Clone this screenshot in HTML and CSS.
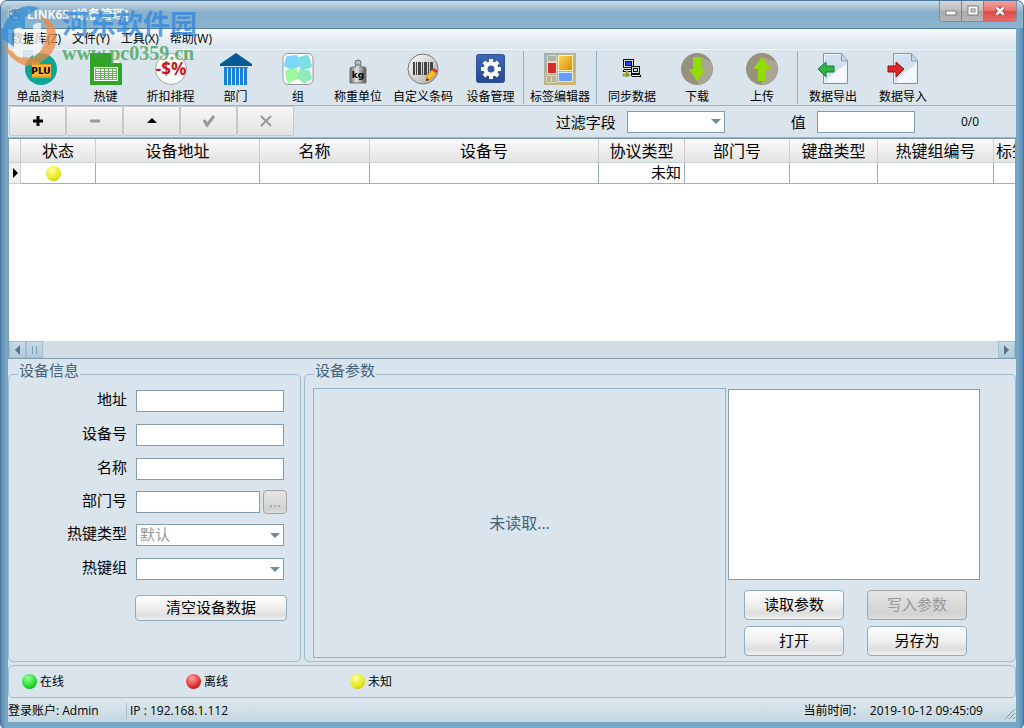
FILE: index.html
```html
<!DOCTYPE html>
<html lang="zh-CN">
<head>
<meta charset="utf-8">
<title>LINK65 [设备管理]</title>
<link rel="stylesheet" href="styles.css">
</head>
<body>
<div class="window">
  <header class="titlebar">
    <svg class="app-icon" width="16" height="16" viewBox="0 0 16 16"><circle cx="8" cy="8" r="7" fill="#7395b6" stroke="#dce7ef"/><path d="M2 5h5v4H3zM9 3h5v4H9zM6 9h6v4H6z" fill="#e7eef4" stroke="#6485a2"/><circle cx="12" cy="4" r="2" fill="#e0ab5c"/></svg>
    <h1 class="title">LINK65 [设备管理]</h1>
    <div class="controls">
      <button class="ctl" aria-label="最小化"><svg width="14" height="12" viewBox="0 0 14 12"><rect x="2" y="6" width="10" height="4" fill="#fff" stroke="#7c7c7c"/></svg></button>
      <button class="ctl" aria-label="最大化"><svg width="14" height="12" viewBox="0 0 14 12"><rect x="2" y="1" width="10" height="9" fill="#fff" stroke="#7c7c7c"/><rect x="5" y="4" width="4" height="3" fill="#ddd" stroke="#7c7c7c"/></svg></button>
      <button class="ctl close" aria-label="关闭"><svg width="14" height="12" viewBox="0 0 14 12"><path d="M3.500 2.500l7 7M10.500 2.500l-7 7" stroke="#9c3532" stroke-width="4.500"/><path d="M3.500 2.500l7 7M10.500 2.500l-7 7" stroke="#fff" stroke-width="2.600"/></svg></button>
    </div>
  </header>
  <div class="client">
    <nav class="menu">
      <button>数据库(Z)</button><button>文件(Y)</button><button>工具(X)</button><button>帮助(W)</button>
    </nav>
    <div class="toolbar">
      <button class="tool"><svg width="32" height="32" viewBox="0 0 32 32"><circle cx="16" cy="16" r="16" fill="#0ea597"/><path d="M7 9h7l2 2h10v14H7z" fill="#e59a26"/><path d="M7 12h19v11H7z" fill="#fdb733"/><text x="16" y="21" class="plu">PLU</text></svg>单品资料</button>
      <button class="tool"><svg width="32" height="32" viewBox="0 0 32 32"><path d="M0 0h21l11 11v21H0z" fill="#32a426"/><path d="M21 0v10h11z" fill="#9fda83"/><path d="M22 1v9h9z" fill="#edf7e7"/><rect x="4" y="14" width="24" height="14" fill="#fff"/><path d="M5.500 15.500h21v11h-21zM5.500 18.500h21M5.500 20.500h21M5.500 22.500h21M5.500 24.500h21M10.500 15v11M14.500 15v11M18.500 15v11M22.500 15v11" stroke="#68b45c" fill="none"/></svg>热键</button>
      <button class="tool"><svg width="32" height="32" viewBox="0 0 32 32"><circle cx="16" cy="16" r="15.500" fill="#fff" stroke="#a3a7a9"/><text x="16" y="22" class="discount">-$%</text></svg>折扣排程</button>
      <button class="tool"><svg width="32" height="32" viewBox="0 0 32 32"><path d="M16 0L32 11v2H0v-2z" fill="#075a95"/><g fill="#1682ce"><path d="M4 15h3v17H4zM8 15h3v17H8zM12 15h3v17h-3zM16 15h3v17h-3zM20 15h3v17h-3zM24 15h3v17h-3z"/></g><path d="M4 14.500h24" stroke="#1682ce"/></svg>部门</button>
      <button class="tool narrow"><svg width="32" height="32" viewBox="0 0 32 32"><rect x="1" y=".5" width="30" height="31" rx="5" fill="#fff" stroke="#929a9e"/><g stroke-width="4" stroke-linejoin="round"><path d="M6 5l8-1 2 8-6 3-6-3z" fill="#7bd6fa" stroke="#7bd6fa"/><path d="M18 6l7-2 3 9-8 2z" fill="#7ddfe2" stroke="#7ddfe2"/><path d="M5 19l8-2 2 7-8 4z" fill="#9df79c" stroke="#9df79c"/><path d="M19 18l7 1 2 6-6 3-5-4z" fill="#90eab9" stroke="#90eab9"/></g></svg>组</button>
      <button class="tool narrow"><svg width="32" height="32" viewBox="0 0 32 32"><defs><linearGradient id="metal"><stop stop-color="#666"/><stop offset=".4" stop-color="#e6e6e6"/><stop offset="1" stop-color="#555"/></linearGradient></defs><circle cx="16" cy="10" r="3" fill="#bbb" stroke="#666"/><path d="M14 12h5v2h4q1 0 1 2v14H8V16q0-2 2-2h4z" fill="url(#metal)" stroke="#777"/><text x="16" y="25" class="kg">kg</text></svg>称重单位</button>
      <button class="tool wide"><svg width="32" height="32" viewBox="0 0 32 32"><defs><linearGradient id="disc" x2="1" y2="1"><stop stop-color="#fff"/><stop offset="1" stop-color="#aaa"/></linearGradient></defs><circle cx="16" cy="16" r="15" fill="url(#disc)" stroke="#777"/><path d="M6 9h2v13H6zM9 9h1v13H9zM11 9h3v13h-3zM15 9h1v13h-1zM17 9h3v13h-3zM21 9h1v13h-1zM23 9h3v11h-3z" fill="#444"/><path d="M20 23l5-6 4 3-5 6-5 2z" fill="#ffc31f" stroke="#d88c18"/><path d="M25 17l2-2 4 3-2 2z" fill="#d8353e"/><path d="M19 28l1-3 2 2z" fill="#222"/></svg>自定义条码</button>
      <button class="tool"><svg width="32" height="32" viewBox="0 0 32 32"><defs><linearGradient id="blue" x2="0" y2="1"><stop stop-color="#3e67b5"/><stop offset="1" stop-color="#254991"/></linearGradient></defs><rect x="1.500" y="1.500" width="28" height="28" rx="2" fill="url(#blue)" stroke="#30539a"/><g fill="#fff"><circle cx="16" cy="16" r="7.500"/><path d="M14 6h4v20h-4zM6 14h20v4H6z"/><path d="M14 6h4v20h-4zM6 14h20v4H6z" transform="rotate(45 16 16)"/></g><circle cx="16" cy="16" r="3.500" fill="#3159a5"/></svg>设备管理</button>
      <span class="separator"></span>
      <button class="tool label-tool"><svg width="32" height="32" viewBox="0 0 32 32"><defs><linearGradient id="tile" x2="1" y2="1"><stop stop-color="#9fb3b4"/><stop offset="1" stop-color="#d7b662"/></linearGradient><linearGradient id="gold" x2="1" y2="1"><stop stop-color="#ffd75a"/><stop offset="1" stop-color="#d88a00"/></linearGradient></defs><path d="M0 0h32v32H0z" fill="url(#tile)"/><path d="M3.500 2.500h9v6h-9zM2.500 22.500h10v7h-10zM7.500 22v8" stroke="#d6d6c8" fill="none"/><rect x="14.500" y="2.500" width="14" height="15" fill="url(#gold)" stroke="#fff1b1"/><rect x="3.500" y="9.500" width="9" height="11" fill="#d52c29" stroke="#ffd0c7"/><rect x="14.500" y="19.500" width="14" height="9" fill="#659bfa" stroke="#d9e8ff"/></svg>标签编辑器</button>
      <span class="separator"></span>
      <button class="tool wide"><svg width="32" height="32" viewBox="0 0 32 32"><g stroke="#111"><rect x="7.500" y="6.500" width="10" height="8" fill="#ddd"/><rect x="9.500" y="8.500" width="6" height="4" fill="#1648db"/><path d="M8 16.500h9l-1 2H7z" fill="#eee"/><rect x="15.500" y="13.500" width="8" height="7" fill="#ddd"/><rect x="17.500" y="15.500" width="4" height="3" fill="#a8ece5"/><path d="M15 21.500h9l1 2h-9z" fill="#eee"/></g><path d="M7 21h6v2H7zM10 18h2v5h-2z" fill="#c3d50d" stroke="#586500" stroke-width=".5"/></svg>同步数据</button>
      <button class="tool narrow"><svg width="32" height="32" viewBox="0 0 32 32"><circle cx="16" cy="16" r="16" fill="#98917e"/><path d="M20 4l10 5A16 16 0 0 1 18 32l-2-4z" fill="#aaa594"/><path d="M12 4h8v12h5l-9 12-8-12h4z" fill="#94dc00"/></svg>下载</button>
      <button class="tool wide"><svg width="32" height="32" viewBox="0 0 32 32"><circle cx="16" cy="16" r="16" fill="#98917e"/><path d="M16 4l14 5A16 16 0 0 1 16 32z" fill="#aaa594"/><path d="M16 4l9 12h-5v12h-8V16H7z" fill="#94dc00"/></svg>上传</button>
      <span class="separator"></span>
      <button class="tool wide"><svg width="32" height="32" viewBox="0 0 32 32"><path d="M6.500.5h18l6 7v23h-24z" fill="#e9f1ff" stroke="#7d92ad"/><path d="M8 2h16v7h5v20H8z" fill="#d3e0f2"/><path d="M10 26L29 11v18H10z" fill="#f5f9ff"/><path d="M24.500 1v7h6" fill="#c8d7eb" stroke="#7d92ad"/><path d="M1 16l8-7v4h8v6H9v5z" fill="#30b447" stroke="#177b29"/></svg>数据导出</button>
      <button class="tool wide"><svg width="32" height="32" viewBox="0 0 32 32"><path d="M6.500.5h18l6 7v23h-24z" fill="#e9f1ff" stroke="#7d92ad"/><path d="M8 2h16v7h5v20H8z" fill="#d3e0f2"/><path d="M10 26L29 11v18H10z" fill="#f5f9ff"/><path d="M24.500 1v7h6" fill="#c8d7eb" stroke="#7d92ad"/><path d="M17 16L9 9v4H1v6h8v5z" fill="#dc2627" stroke="#911514"/></svg>数据导入</button>
    </div>
    <div class="filterbar">
      <div class="record-buttons">
        <button aria-label="添加"><svg width="14" height="14" viewBox="0 0 14 14"><path d="M7 2v10M2 7h10" stroke="#000" stroke-width="3"/></svg></button>
        <button aria-label="删除" disabled><svg width="14" height="14" viewBox="0 0 14 14"><path d="M2 7h10" stroke="#999" stroke-width="3"/></svg></button>
        <button aria-label="编辑"><svg width="14" height="14" viewBox="0 0 14 14"><path d="M2 9l5-5 5 5z"/></svg></button>
        <button aria-label="确认" disabled><svg width="14" height="14" viewBox="0 0 14 14"><path d="M2 6l3 5 7-9" fill="none" stroke="#999" stroke-width="3"/></svg></button>
        <button aria-label="取消" disabled><svg width="14" height="14" viewBox="0 0 14 14"><path d="M2 2l10 10M12 2L2 12" stroke="#999" stroke-width="2"/></svg></button>
      </div>
      <div class="filters">
        <label for="field">过滤字段</label><select id="field"><option></option></select>
        <label class="value-label" for="value">值</label><input id="value" type="text">
        <span class="count">0/0</span>
      </div>
    </div>
    <div class="grid">
      <div class="grid-view">
        <table>
          <colgroup><col class="c-mark"><col class="c-state"><col class="c-address"><col class="c-name"><col class="c-device"><col class="c-protocol"><col class="c-dept"><col class="c-keyboard"><col class="c-hotkey"><col class="c-label"></colgroup>
          <thead><tr><th></th><th>状态</th><th>设备地址</th><th>名称</th><th>设备号</th><th>协议类型</th><th>部门号</th><th>键盘类型</th><th>热键组编号</th><th class="last">标签</th></tr></thead>
          <tbody><tr><td class="mark"><svg width="7" height="10" viewBox="0 0 7 10"><path d="M1 0l5 5-5 5z"/></svg></td><td class="state"><span class="ball yellow"></span></td><td></td><td></td><td></td><td class="right">未知</td><td></td><td></td><td></td><td></td></tr></tbody>
        </table>
      </div>
      <div class="scrollbar">
        <button aria-label="向左"><svg width="7" height="10" viewBox="0 0 7 10"><path d="M6 0L1 5l5 5z" fill="#5b7183"/></svg></button><button class="thumb" aria-label="滚动"><svg width="5" height="8" viewBox="0 0 5 8"><path d="M.5 0v8M4.500 0v8" stroke="#829eb2"/></svg></button>
        <button class="scroll-right" aria-label="向右"><svg width="7" height="10" viewBox="0 0 7 10"><path d="M1 0l5 5-5 5z" fill="#5b7183"/></svg></button>
      </div>
    </div>
    <div class="panels">
      <fieldset class="info">
        <legend>设备信息</legend>
        <div class="form">
          <label for="addr">地址</label><input id="addr" type="text">
          <label for="num">设备号</label><input id="num" type="text">
          <label for="name">名称</label><input id="name" type="text">
          <label for="dept">部门号</label><div class="pick"><input id="dept" type="text"><button class="push" disabled>...</button></div>
          <label for="ktype">热键类型</label><select id="ktype" disabled><option>默认</option></select>
          <label for="kgroup">热键组</label><select id="kgroup"><option></option></select>
        </div>
        <button class="push clear">清空设备数据</button>
      </fieldset>
      <fieldset class="params">
        <legend>设备参数</legend>
        <div class="params-body">
          <div class="unread">未读取...</div>
          <div class="side">
            <div class="list"></div>
            <div class="actions">
              <button class="push">读取参数</button><button class="push" disabled>写入参数</button>
              <button class="push">打开</button><button class="push">另存为</button>
            </div>
          </div>
        </div>
      </fieldset>
    </div>
    <div class="key">
      <span><i class="ball green"></i>在线</span><span><i class="ball red"></i>离线</span><span><i class="ball yellow"></i>未知</span>
    </div>
    <footer class="status">
      <span class="account">登录账户: Admin</span><span class="ip">IP : 192.168.1.112</span><span class="time">当前时间：  2019-10-12 09:45:09</span>
      <svg width="12" height="12" viewBox="0 0 12 12"><path d="M1 11L11 1M5 11l6-6M9 11l2-2" stroke="#7697ac"/></svg>
    </footer>
  </div>
  <div class="watermark">
    <svg width="58" height="62" viewBox="0 0 58 62"><path d="M28 1C12 2 0 17 1 33L13 42V24H24V12L38 3Q34 1 28 1z" fill="#318ed5"/><path d="M2 38q5 17 23 23q25-3 30-23q2-15-7-23l-9-4q9 10 6 23q-4 16-17 19Q12 51 2 38z" fill="#ee8b3f"/><path d="M13 24q6-3 9 0v16l10 1V20q4-3 8-2v26q-4 7-8 8v-8H22v9q-7-1-9-5z" fill="#f5f8f7"/></svg>
    <div><p class="wm-name">河东软件园</p><p class="wm-url">www.pc0359.cn</p></div>
  </div>
</div>
</body>
</html>
```

FILE: styles.css
```css
* { box-sizing: border-box; }
body { margin: 0; background: #fff; color: #000; font: 12px/16px "Open Sans", "Noto Sans CJK SC", sans-serif; }
button, input, select { font: inherit; color: inherit; margin: 0; }
button { border: 0; background: none; padding: 0; }
p { margin: 0; }

.window { position: relative; display: flex; flex-direction: column; min-height: 100vh; padding: 0 7px 6px; border: 1px solid #46749b; border-radius: 7px 7px 5px 5px; background: linear-gradient(90deg, #5c8db4, #78a6c7 5px, #78a6c7 calc(100% - 5px), #5c8db4); }
.titlebar { display: flex; height: 27px; margin: 0 -7px; padding: 0 6px; border-radius: 6px 6px 0 0; background: linear-gradient(#cbdce8, #a3bfd2 7px, #87aeca 12px, #8bb5d0); }
.app-icon { margin-top: 6px; }
.title { margin: 6px 0 0 4px; color: #fff; font: bold 12px/16px "Open Sans", "Noto Sans CJK SC", sans-serif; opacity: .9; }
.controls { display: flex; height: 21px; margin-left: auto; border: 1px solid #818f99; border-top: 0; border-radius: 0 0 4px 4px; overflow: hidden; }
.ctl { display: flex; align-items: center; justify-content: center; width: 22px; border-right: 1px solid #7c8286; background: linear-gradient(#d8d8d8, #bbb 50%, #aaa 51%, #b6b6b6); }
.ctl.close { width: 32px; border: 0; background: linear-gradient(#f2a19b, #e9706d 50%, #d94a48 51%, #e86b68); }

.client { display: flex; flex: 1; flex-direction: column; border-top: 1px solid #557f9f; background: #dae4ec; }
.menu { display: flex; gap: 11px; height: 21px; padding-left: 3px; background: linear-gradient(#f8fafc, #d8e3eb); border-bottom: 1px solid #f2f6f9; }
.toolbar { display: flex; height: 56px; border-bottom: 1px solid #93b5cd; }
.tool { display: flex; flex-direction: column; align-items: center; justify-content: flex-start; gap: 2px; width: 65px; padding-top: 3px; line-height: 18px; white-space: nowrap; font-family: "Noto Sans CJK SC", sans-serif; }
.tool svg { display: block; flex: none; }
.narrow { width: 60px; }
.wide { width: 70px; }
.label-tool { width: 72px; }
.separator { width: 1px; margin: 1px 0; background: #8fb2cc; }
.plu { font: bold 9px "DejaVu Sans", sans-serif; text-anchor: middle; }
.discount { font: bold 17px "Open Sans", sans-serif; fill: #c5161d; text-anchor: middle; }
.kg { font: bold 9px "DejaVu Sans", sans-serif; text-anchor: middle; }

.filterbar { display: flex; height: 32px; border-bottom: 1px solid #93b5cd; justify-content: space-between; }
.record-buttons { display: flex; height: 30px; padding-left: 1px; }
.record-buttons button { display: flex; align-items: center; justify-content: center; width: 57px; border: 1px solid #c6c8ca; border-radius: 2px; background: linear-gradient(#f7f7f7, #e2e2e2); }
.filters { display: flex; align-items: center; padding-right: 37px; font-size: 15px; }
.filters select { width: 98px; margin-left: 11px; }
.value-label { margin-left: 66px; }
.filters input { width: 98px; margin-left: 11px; }
.count { margin-left: 46px; font-size: 12px; }
input, select { height: 22px; border: 1px solid #829cb0; border-radius: 0; background: #fff; padding: 0 3px; }
select { appearance: none; background: #fff url("data:image/svg+xml,%3Csvg xmlns='http://www.w3.org/2000/svg' width='10' height='5'%3E%3Cpath d='M0 0h10L5 5z' fill='%23708b9f'/%3E%3C/svg%3E") no-repeat right 3px center; }
select:disabled { color: #999; opacity: 1; }

.grid { display: flex; flex: 1; flex-direction: column; min-height: 221px; border: 1px solid #829cb0; border-top-color: #7898ae; background: #fff; }
.grid-view { flex: 1; overflow: hidden; }
table { width: 100%; table-layout: fixed; border-collapse: separate; border-spacing: 0; font-family: "Noto Sans CJK SC", sans-serif; }
th { height: 24px; padding: 0 0 1px; border-right: 1px solid #ccc; border-bottom: 1px solid #c9d3da; background: linear-gradient(#fafafa, #e3e3e3); font-size: 16px; line-height: 20px; font-weight: 400; white-space: nowrap; overflow: hidden; }
th.last { padding-left: 2px; text-align: left; text-overflow: clip; }
td { height: 21px; padding: 0 3px; border-right: 1px solid #93b1c8; border-bottom: 1px solid #93b1c8; font-size: 15px; line-height: 18px; }
th:last-child, td:last-child { border-right: 0; }
.mark { padding: 0 3px; background: #f0f0f0; border-color: #ccc; }
.mark svg, .ball { display: block; }
.state .ball { margin-left: 22px; }
td.right { padding: 0 3px 2px; text-align: right; }
.c-mark { width: 12px; }
.c-state { width: 75px; }
.c-address { width: 164px; }
.c-name { width: 110px; }
.c-device { width: auto; }
.c-protocol { width: 86px; }
.c-dept { width: 105px; }
.c-keyboard { width: 88px; }
.c-hotkey { width: 116px; }
.c-label { width: 21px; }
.scrollbar { display: flex; height: 17px; background: #d2dde3; }
.scrollbar button { display: flex; align-items: center; justify-content: center; width: 17px; border: 1px solid #a4bed0; background: linear-gradient(#c5d9e7, #b2cbdd); }
.scrollbar .scroll-right { margin-left: auto; }

.panels { display: grid; grid-template-columns: 293px 1fr; gap: 3px; padding-top: 3px; font-size: 15px; }
fieldset { min-width: 0; margin: 0; padding: 0; border: 1px solid #a0bdd0; border-radius: 5px; }
legend { height: 24px; margin-left: 9px; padding: 0 1px; color: #42657f; line-height: 16px; }
.form { display: grid; grid-template-columns: 118px 148px; grid-template-rows: 34px 34px 33px 33px 34px 34px; column-gap: 9px; align-items: start; margin-top: 4px; }
.form label { text-align: right; line-height: 18px; }
.form select { padding-bottom: 2px; }
.pick { display: flex; gap: 3px; margin-right: -3px; }
.pick input { width: 124px; }
.pick .push { width: 24px; height: 24px; margin-top: -1px; }
.push { height: 30px; border: 1px solid #91abc0; border-radius: 4px; padding-bottom: 2px; background: linear-gradient(#fff, #eee 50%, #dedede 80%, #f0f0f0); line-height: 20px; }
.push:disabled { border-color: #a4a4a4; color: #999; background: linear-gradient(#e6e6e6, #d2d2d2 80%, #ddd); }
.clear { display: block; width: 152px; height: 26px; margin: 3px 0 40px 126px; }
.params-body { display: grid; grid-template-columns: 1fr 252px; gap: 2px; height: 270px; margin: 2px 35px 3px 8px; }
.unread { display: flex; align-items: center; justify-content: center; border: 1px solid #93b1c8; color: #42657f; font-size: 16px; }
.side { display: flex; flex-direction: column; padding-top: 1px; }
.list { height: 191px; border: 1px solid #829cb0; background: #fff; }
.actions { display: grid; grid-template-columns: 100px 100px; gap: 6px 23px; padding: 10px 0 0 16px; }
.key { display: flex; height: 33px; margin-top: 3px; padding-left: 13px; border: 1px solid #a0bdd0; border-radius: 5px; }
.key span { display: flex; align-items: center; gap: 3px; width: 164px; }
.ball { width: 15px; height: 15px; border-radius: 50%; }
.yellow { background: radial-gradient(circle at 40% 30%, #ffff9b, #e4e71a 60%, #a5a700); }
.green { background: radial-gradient(circle at 40% 30%, #9aff9c, #21d72c 60%, #078e12); }
.red { background: radial-gradient(circle at 40% 30%, #ffa3a0, #dc302c 60%, #8d0704); }
.status { display: flex; align-items: center; height: 23px; margin-top: 1px; background: linear-gradient(#dce7ed, #c6d7e1); }
.account { width: 119px; border-right: 1px solid #a7c0d0; }
.ip { padding-left: 3px; }
.time { margin-left: auto; padding-right: 21px; white-space: pre; }
.status svg { align-self: end; margin-bottom: 2px; }

.watermark { position: absolute; top: 4px; left: 0; display: flex; gap: 3px; opacity: .75; pointer-events: none; }
.wm-name { height: 38px; color: #2f86dc; font: bold 27px/36px "Noto Sans CJK SC", sans-serif; white-space: nowrap; }
.wm-url { color: #3fa04f; font: bold 20px/20px "Liberation Serif", serif; }
```
